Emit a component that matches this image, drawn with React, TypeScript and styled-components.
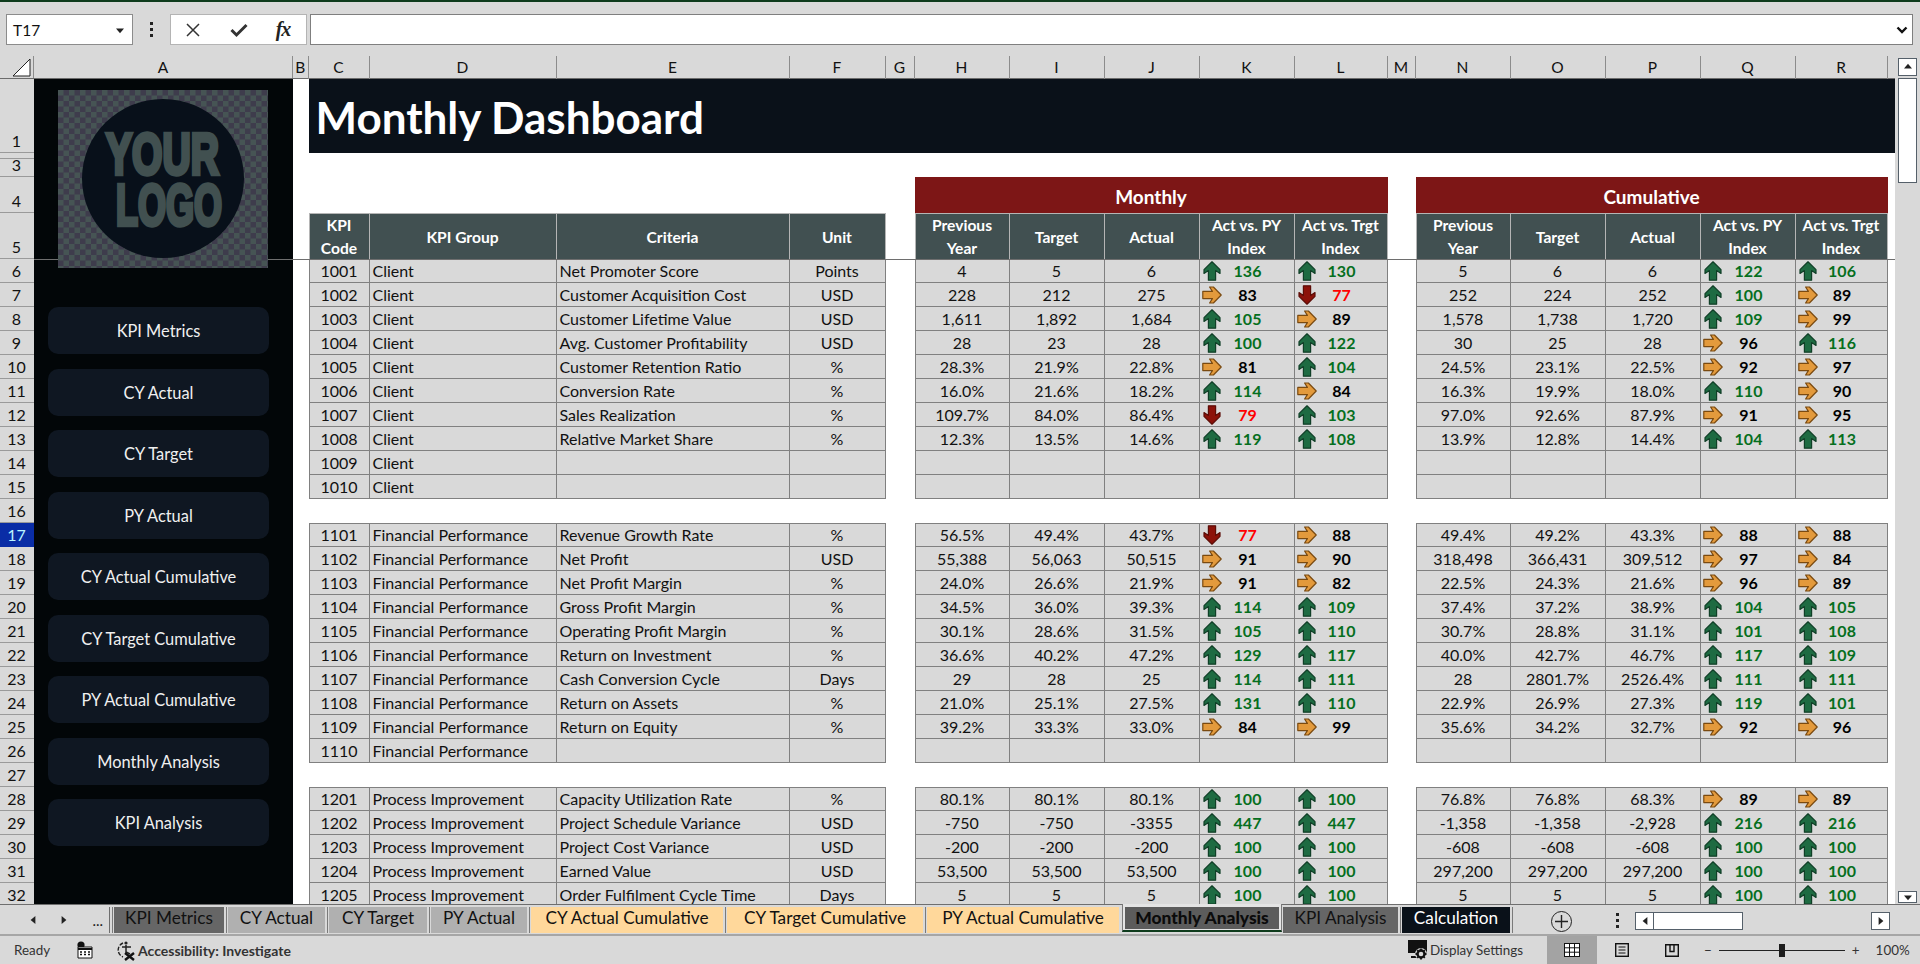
import * as React from 'react'
import styled, { createGlobalStyle } from 'styled-components'

const FONT = `Lato, "Open Sans", sans-serif`
const CHROME = '#d9d9d9'
const GRID_LINE = '#808080'
const COLUMNS = '15.5px 61px 187px 233px 96px 29px 95px 95px 95px 95px 93px 28px 95px 95px 95px 95px 92px 7.5px'

const GlobalStyle = createGlobalStyle`
  html, body {
    margin: 0;
    height: 100%;
    overflow: hidden;
    background: ${CHROME};
  }
  #root {
    height: 964px;
  }
  * {
    box-sizing: border-box;
  }
`

const Page = styled.div`
  width: 1920px;
  height: 964px;
  display: flex;
  flex-direction: column;
  background: ${CHROME};
  border-top: 2px solid #0e3b1c;
  font-family: ${FONT};
  color: #111;
  overflow: hidden;
`

// formula bar

const FormulaRow = styled.div`
  height: 54px;
  padding: 12px 7px 11px 6px;
  display: flex;
  align-items: stretch;
  flex-shrink: 0;
`

const NameBox = styled.div`
  width: 127px;
  background: #fff;
  border: 1px solid #8c8c8c;
  display: flex;
  align-items: center;
  justify-content: space-between;
  padding: 0 8px 0 6px;
  font-size: 15.5px;
`

const Kebab = styled.div<{ $w: number; $ml?: number }>`
  width: ${(p) => p.$w}px;
  margin-left: ${(p) => p.$ml ?? 0}px;
  flex-shrink: 0;
  display: flex;
  flex-direction: column;
  align-items: center;
  justify-content: center;
  gap: 3px;

  i {
    display: block;
    width: 3px;
    height: 3px;
    background: #222;
  }
`

const FormulaButtons = styled.div`
  width: 137px;
  background: #fff;
  border: 1px solid #b4b4b4;
  display: grid;
  grid-template-columns: 44px 48px 40px;
  align-items: center;
  justify-items: center;
`

const FxLabel = styled.span`
  font-family: 'Liberation Serif', serif;
  font-style: italic;
  font-weight: 700;
  font-size: 20px;
  letter-spacing: -1px;
  color: #222;
`

const FormulaInput = styled.div`
  flex: 1;
  margin-left: 3px;
  background: #fff;
  border: 1px solid #7f7f7f;
  display: flex;
  align-items: center;
  justify-content: flex-end;
  padding-right: 4px;
`

// sheet

const Workspace = styled.div`
  height: 848px;
  display: flex;
  flex-shrink: 0;
`

const SheetFrame = styled.div`
  width: 1895px;
  display: flex;
  flex-direction: column;
`

const ColumnHeads = styled.div`
  height: 23px;
  display: flex;
  border-bottom: 1px solid #6c6c6c;
  flex-shrink: 0;
`

const Corner = styled.div`
  width: 34px;
  border-right: 1px solid #8c8c8c;
  display: flex;
  align-items: flex-end;
  justify-content: flex-end;
  padding: 0 2px 1px 0;
`

const ColumnHeadA = styled.div`
  width: 259px;
  font-size: 15.5px;
  line-height: 23px;
  text-align: center;
  border-right: 1px solid #8c8c8c;
`

const ColumnHeadRest = styled.div`
  display: grid;
  grid-template-columns: ${COLUMNS};
`

const ColumnHead = styled.div`
  font-size: 15.5px;
  line-height: 23px;
  text-align: center;
  border-right: 1px solid #8c8c8c;

  &:last-child {
    border-right: 0;
  }
`

const SheetBody = styled.div`
  position: relative;
  flex: 1;
  display: flex;
  min-height: 0;
  overflow: hidden;
`

const FreezeLine = styled.div`
  position: absolute;
  left: 34px;
  right: 0;
  top: 180px;
  height: 1px;
  background: #6e6e6e;
  z-index: 1;
`

const RowHeads = styled.div`
  width: 34px;
  flex-shrink: 0;
  display: flex;
  flex-direction: column;
`

const RowHead = styled.div<{ $h: number; $active?: boolean }>`
  height: ${(p) => p.$h}px;
  flex-shrink: 0;
  overflow: hidden;
  display: flex;
  align-items: flex-end;
  justify-content: center;
  font-size: 16px;
  line-height: 22px;
  padding-right: 1px;
  border-bottom: 1px solid ${(p) => (p.$active ? '#0a2da6' : '#9a9a9a')};
  background: ${(p) => (p.$active ? '#0a2da6' : CHROME)};
  color: ${(p) => (p.$active ? '#b8f4ff' : '#111')};
`

const Sidebar = styled.div`
  width: 259px;
  flex-shrink: 0;
  background: #020608;
  padding: 11px 24px 0 14px;
  display: flex;
  flex-direction: column;
  align-items: flex-start;
`

const LogoSvg = styled.svg`
  position: relative;
  z-index: 2;
  margin: 0 0 39px 10px;
  flex-shrink: 0;
`

const NavList = styled.div`
  display: flex;
  flex-direction: column;
  gap: 14.5px;
  width: 221px;
`

const NavButton = styled.div`
  height: 47px;
  border-radius: 10px;
  background: #0f1722;
  color: #f0f0f0;
  font-size: 16.4px;
  display: flex;
  align-items: center;
  justify-content: center;
`

const Content = styled.div`
  width: 1602px;
  background: #fff;
  display: flex;
  flex-direction: column;
`

const TitleBand = styled.div`
  height: 74px;
  margin-left: 15.5px;
  margin-bottom: 24px;
  flex-shrink: 0;
  background: #0a1119;
  color: #fff;
  font-size: 44px;
  font-weight: 700;
  line-height: 76px;
  padding-left: 7px;
`

const Row = styled.div<{ $h?: number }>`
  display: grid;
  grid-template-columns: ${COLUMNS};
  height: ${(p) => p.$h ?? 24}px;
  flex-shrink: 0;
`

const Banner = styled.div<{ $from: number }>`
  grid-column: ${(p) => p.$from} / span 5;
  background: #7d1616;
  color: #fff;
  font-size: 19px;
  font-weight: 700;
  display: flex;
  align-items: center;
  justify-content: center;
  padding-top: 2px;
`

const HeadCell = styled.div<{ $col: number; $start?: boolean }>`
  grid-column: ${(p) => p.$col};
  background: #415051;
  color: #fff;
  font-size: 15.6px;
  font-weight: 700;
  line-height: 23px;
  text-align: center;
  white-space: nowrap;
  display: flex;
  align-items: center;
  justify-content: center;
  border-top: 1px solid #b5b5b5;
  border-right: 1px solid #b5b5b5;
  border-left: ${(p) => (p.$start ? '1px solid #b5b5b5' : '0')};
`

const Cell = styled.div<{ $col: number; $start?: boolean; $top?: boolean; $left?: boolean }>`
  grid-column: ${(p) => p.$col};
  background: ${CHROME};
  font-size: 16px;
  line-height: ${(p) => (p.$top ? '22px' : '24px')};
  white-space: nowrap;
  overflow: hidden;
  text-align: ${(p) => (p.$left ? 'left' : 'center')};
  padding-left: ${(p) => (p.$left ? '3px' : '0')};
  border-right: 1px solid ${GRID_LINE};
  border-bottom: 1px solid ${GRID_LINE};
  border-left: ${(p) => (p.$start ? `1px solid ${GRID_LINE}` : '0')};
  border-top: ${(p) => (p.$top ? `1px solid ${GRID_LINE}` : '0')};
`

const IndexCell = styled(Cell)`
  display: grid;
  grid-template-columns: 1fr auto 1fr;
  align-items: center;
  padding-left: 2px;
`

const IndexValue = styled.b<{ $tone: string }>`
  font-weight: 700;
  color: ${(p) => p.$tone};
`

const ArrowSvg = styled.svg`
  display: block;
`

// vertical scrollbar

const VScroll = styled.div`
  width: 25px;
  display: flex;
  flex-direction: column;
  padding: 2px 3px 1px 3px;
`

const ScrollButton = styled.div<{ $h: number }>`
  height: ${(p) => p.$h}px;
  flex-shrink: 0;
  background: #fff;
  border: 1px solid #55606a;
  display: flex;
  align-items: center;
  justify-content: center;
`

const VThumb = styled.div`
  height: 105px;
  margin-top: 2px;
  background: #fff;
  border: 1px solid #55606a;
`

const VTrack = styled.div`
  flex: 1;
`

// sheet tabs

const TabBar = styled.div`
  height: 32px;
  flex-shrink: 0;
  display: flex;
  align-items: flex-start;
  border-bottom: 2px solid #a6a6a6;
  border-top: 1px solid #6e6e6e;
  position: relative;
  padding-top: 2px;
`

const TabNav = styled.div`
  width: 110px;
  height: 26px;
  display: grid;
  grid-template-columns: 37px 31px 35px 1fr;
  align-items: center;
  justify-items: end;
  border-right: 1px solid #6e6e6e;
  font-size: 15px;
  color: #222;
`

const TabSep = styled.div`
  width: 1px;
  height: 26px;
  margin: 0 1.5px;
  background: #7a7a7a;
  flex-shrink: 0;
`

const Tab = styled.div<{ $w: number; $bg: string; $fg?: string }>`
  width: ${(p) => p.$w}px;
  height: 26px;
  flex-shrink: 0;
  background: ${(p) => p.$bg};
  color: ${(p) => p.$fg ?? '#111'};
  font-size: 17.2px;
  line-height: 22px;
  text-align: center;
  white-space: nowrap;
`

const ActiveTab = styled.div`
  width: 160px;
  height: 28px;
  flex-shrink: 0;
  margin: -3px 1px 0 3px;
  padding: 3px 2px 0;
  background: #e4e4e4;
  border-left: 1px solid #7a7a7a;
  border-right: 1px solid #7a7a7a;
  border-bottom: 2px solid #0e3b1c;
  position: relative;
  z-index: 1;
`

const ActiveLabel = styled.div`
  height: 22px;
  background: #5c5c5c;
  color: #0b0b0b;
  font-size: 17.4px;
  font-weight: 900;
  line-height: 21px;
  text-align: center;
  white-space: nowrap;
`

const AddSheet = styled.div`
  margin: 4px 0 0 37px;
  width: 21px;
  height: 21px;
  flex-shrink: 0;
  border: 1px solid #222;
  border-radius: 50%;
  display: flex;
  align-items: center;
  justify-content: center;
`

const TabKebabSlot = styled.div`
  height: 26px;
  display: flex;
  flex-shrink: 0;
`

const HScroll = styled.div`
  margin: 5px 0 0 8px;
  width: 255px;
  height: 18px;
  display: flex;
  flex-shrink: 0;
`

const HButton = styled.div<{ $push?: boolean }>`
  width: 19px;
  flex-shrink: 0;
  background: #fff;
  border: 1px solid #55606a;
  display: flex;
  align-items: center;
  justify-content: center;
  margin-left: ${(p) => (p.$push ? 'auto' : '0')};
`

const HThumb = styled.div`
  width: 89px;
  background: #fff;
  border: 1px solid #55606a;
  border-left: 0;
`

// status bar

const StatusBar = styled.div`
  flex: 1;
  display: flex;
  align-items: stretch;
  font-size: 13.4px;
  color: #333;
  padding-left: 14px;
`

const StatusItem = styled.div<{ $w?: number; $ml?: number; $strong?: boolean }>`
  display: flex;
  align-items: center;
  gap: 2px;
  margin-left: ${(p) => p.$ml ?? 0}px;
  width: ${(p) => (p.$w ? `${p.$w}px` : 'auto')};
  font-weight: ${(p) => (p.$strong ? 700 : 400)};
  font-size: ${(p) => (p.$strong ? '14px' : 'inherit')};
  white-space: nowrap;
  flex-shrink: 0;
`

const ViewButton = styled.div<{ $on?: boolean; $ml?: number }>`
  width: 50px;
  flex-shrink: 0;
  margin-left: ${(p) => p.$ml ?? 0}px;
  display: flex;
  align-items: center;
  justify-content: center;
  background: ${(p) => (p.$on ? '#a3a3a3' : 'transparent')};
`

const ZoomSlider = styled.div`
  width: 126px;
  height: 13px;
  margin: 0 5px;
  display: flex;
  align-items: center;
  position: relative;
  flex-shrink: 0;

  &::before {
    content: '';
    width: 100%;
    height: 1px;
    background: #222;
  }
`

const ZoomThumb = styled.div`
  position: absolute;
  left: 60px;
  top: 0;
  width: 6px;
  height: 13px;
  background: #1c1c1c;
`

// drawings

const Triangle = ({ dir, size = 8, color = '#222' }: { dir: 'up' | 'down' | 'left' | 'right'; size?: number; color?: string }) => {
  const points = {
    up: '0,7 5,1 10,7',
    down: '0,3 10,3 5,9',
    left: '8,0 8,10 2,5',
    right: '2,0 2,10 8,5'
  }[dir]
  return (
    <svg width={size} height={size} viewBox='0 0 10 10'>
      <polygon points={points} fill={color} />
    </svg>
  )
}

const arrowStyles = {
  up: { fill: '#1e6b42', stroke: '#103f27', turn: 0 },
  down: { fill: '#8c120a', stroke: '#5c0d07', turn: 180 },
  right: { fill: '#e39a3c', stroke: '#7a4a10', turn: 90 }
}

const IndexArrow = ({ dir }: { dir: keyof typeof arrowStyles }) => {
  const s = arrowStyles[dir]
  return (
    <ArrowSvg width='20' height='20' viewBox='0 0 20 20'>
      <path
        d='M10 .8 L18 8.6 V12.4 L13.6 9.6 V19.2 H6.4 V9.6 L2 12.4 V8.6 Z'
        fill={s.fill}
        stroke={s.stroke}
        strokeWidth='1.2'
        strokeLinejoin='round'
        transform={`rotate(${s.turn} 10 10)`}
      />
    </ArrowSvg>
  )
}

const Logo = () => (
  <LogoSvg width='210' height='178' viewBox='0 0 210 178'>
    <defs>
      <pattern id='checker' width='11' height='11' patternUnits='userSpaceOnUse'>
        <rect width='11' height='11' fill='#3e3c4c' />
        <rect width='5.5' height='5.5' fill='#465454' />
        <rect x='5.5' y='5.5' width='5.5' height='5.5' fill='#465454' />
      </pattern>
    </defs>
    <rect width='210' height='178' fill='url(#checker)' />
    <ellipse cx='105' cy='88.5' rx='81' ry='79.5' fill='#08101a' />
    <g fontFamily='"Liberation Sans", sans-serif' fontWeight='700' fontSize='58' fill='#415050' stroke='#415050' strokeWidth='4.4' strokeLinejoin='miter'>
      <text x='48' y='84' textLength='113' lengthAdjust='spacingAndGlyphs'>YOUR</text>
      <text x='58' y='135' textLength='106' lengthAdjust='spacingAndGlyphs'>LOGO</text>
    </g>
  </LogoSvg>
)

const CancelIcon = () => (
  <svg width='16' height='16' viewBox='0 0 16 16'>
    <path d='M2 2 L14 14 M14 2 L2 14' stroke='#333' strokeWidth='1.5' />
  </svg>
)

const CheckIcon = () => (
  <svg width='18' height='16' viewBox='0 0 18 16'>
    <path d='M1.5 8 L6.5 13 L16.5 3' stroke='#333' strokeWidth='3' fill='none' />
  </svg>
)

const Chevron = () => (
  <svg width='12' height='8' viewBox='0 0 12 8'>
    <path d='M1.5 1.5 L6 6 L10.5 1.5' stroke='#111' strokeWidth='2.4' fill='none' />
  </svg>
)

const CornerMark = () => (
  <svg width='19' height='19' viewBox='0 0 19 19'>
    <path d='M18 1 V18 H1 Z' fill='#fff' stroke='#222' strokeWidth='1' />
  </svg>
)

const PlusMark = () => (
  <svg width='13' height='13' viewBox='0 0 13 13'>
    <path d='M6.5 0 V13 M0 6.5 H13' stroke='#222' strokeWidth='1.4' />
  </svg>
)

const MacroIcon = () => (
  <svg width='16' height='18' viewBox='0 0 16 18'>
    <circle cx='4' cy='4' r='3.6' fill='#111' />
    <path d='M1 6 H15 V17 H1 Z' fill='#fff' stroke='#111' />
    <path d='M1 7 H15 V9 H1 Z' fill='#111' />
    <path d='M3 11 H5 M7 11 H9 M11 11 H13 M3 13.5 H5 M7 13.5 H9 M11 13.5 H13' stroke='#111' strokeWidth='1.5' />
  </svg>
)

const AccessibilityIcon = () => (
  <svg width='20' height='21' viewBox='0 0 20 21'>
    <path d='M7 3 A7.5 7.5 0 0 0 7 17' stroke='#222' strokeWidth='1.4' fill='none' strokeDasharray='4 1.5' />
    <circle cx='10' cy='3' r='1.6' fill='#222' />
    <path d='M6 7 H15 M10 5 V12 L14 14' stroke='#222' strokeWidth='1.5' fill='none' />
    <path d='M9 13 L18 20 M18 13 L9 20' stroke='#111' strokeWidth='2.4' />
  </svg>
)

const DisplayIcon = () => (
  <svg width='20' height='22' viewBox='0 0 20 22'>
    <path d='M0 1 H19 V14 H0 Z' fill='#111' />
    <path d='M3 17 H9 V19 H3 Z' fill='#111' />
    <circle cx='13' cy='15' r='6' fill={CHROME} />
    <circle cx='13' cy='15' r='3.5' fill='none' stroke='#111' strokeWidth='2.4' />
    <path d='M13 9.5 V11 M13 19 V20.5 M7.5 15 H9 M17 15 H18.5 M9.2 11.2 L10.2 12.2 M15.8 17.8 L16.8 18.8 M16.8 11.2 L15.8 12.2 M10.2 17.8 L9.2 18.8' stroke='#111' strokeWidth='1.8' />
  </svg>
)

const GridViewIcon = () => (
  <svg width='16' height='14' viewBox='0 0 16 14'>
    <rect x='.5' y='.5' width='15' height='13' fill='#fff' stroke='#111' />
    <path d='M5.5 1 V13 M10.5 1 V13 M1 4.8 H15 M1 9.2 H15' stroke='#111' />
  </svg>
)

const PageViewIcon = () => (
  <svg width='14' height='14' viewBox='0 0 14 14'>
    <rect x='.7' y='.7' width='12.6' height='12.6' fill='none' stroke='#111' strokeWidth='1.4' />
    <path d='M3.5 4 H10.5 M3.5 7 H10.5 M3.5 10 H10.5' stroke='#111' />
  </svg>
)

const BreakViewIcon = () => (
  <svg width='14' height='13' viewBox='0 0 14 13'>
    <path d='M.7 .7 H13.3 V12.3 H.7 Z M5 .7 V7.5 H9 V.7' fill='none' stroke='#111' strokeWidth='1.4' />
  </svg>
)

// data

type Group = { name: string; rows: [string, string, string, (string | number)[], (string | number)[]][] }

const groups: Group[] = [
  {
    name: 'Client',
    rows: [
      ['Net Promoter Score', 'Points', '1001', ['4', '5', '6', 136, 130], ['5', '6', '6', 122, 106]],
      ['Customer Acquisition Cost', 'USD', '1002', ['228', '212', '275', 83, 77], ['252', '224', '252', 100, 89]],
      ['Customer Lifetime Value', 'USD', '1003', ['1,611', '1,892', '1,684', 105, 89], ['1,578', '1,738', '1,720', 109, 99]],
      ['Avg. Customer Profitability', 'USD', '1004', ['28', '23', '28', 100, 122], ['30', '25', '28', 96, 116]],
      ['Customer Retention Ratio', '%', '1005', ['28.3%', '21.9%', '22.8%', 81, 104], ['24.5%', '23.1%', '22.5%', 92, 97]],
      ['Conversion Rate', '%', '1006', ['16.0%', '21.6%', '18.2%', 114, 84], ['16.3%', '19.9%', '18.0%', 110, 90]],
      ['Sales Realization', '%', '1007', ['109.7%', '84.0%', '86.4%', 79, 103], ['97.0%', '92.6%', '87.9%', 91, 95]],
      ['Relative Market Share', '%', '1008', ['12.3%', '13.5%', '14.6%', 119, 108], ['13.9%', '12.8%', '14.4%', 104, 113]],
      ['', '', '1009', [], []],
      ['', '', '1010', [], []]
    ]
  },
  {
    name: 'Financial Performance',
    rows: [
      ['Revenue Growth Rate', '%', '1101', ['56.5%', '49.4%', '43.7%', 77, 88], ['49.4%', '49.2%', '43.3%', 88, 88]],
      ['Net Profit', 'USD', '1102', ['55,388', '56,063', '50,515', 91, 90], ['318,498', '366,431', '309,512', 97, 84]],
      ['Net Profit Margin', '%', '1103', ['24.0%', '26.6%', '21.9%', 91, 82], ['22.5%', '24.3%', '21.6%', 96, 89]],
      ['Gross Profit Margin', '%', '1104', ['34.5%', '36.0%', '39.3%', 114, 109], ['37.4%', '37.2%', '38.9%', 104, 105]],
      ['Operating Profit Margin', '%', '1105', ['30.1%', '28.6%', '31.5%', 105, 110], ['30.7%', '28.8%', '31.1%', 101, 108]],
      ['Return on Investment', '%', '1106', ['36.6%', '40.2%', '47.2%', 129, 117], ['40.0%', '42.7%', '46.7%', 117, 109]],
      ['Cash Conversion Cycle', 'Days', '1107', ['29', '28', '25', 114, 111], ['28', '2801.7%', '2526.4%', 111, 111]],
      ['Return on Assets', '%', '1108', ['21.0%', '25.1%', '27.5%', 131, 110], ['22.9%', '26.9%', '27.3%', 119, 101]],
      ['Return on Equity', '%', '1109', ['39.2%', '33.3%', '33.0%', 84, 99], ['35.6%', '34.2%', '32.7%', 92, 96]],
      ['', '', '1110', [], []]
    ]
  },
  {
    name: 'Process Improvement',
    rows: [
      ['Capacity Utilization Rate', '%', '1201', ['80.1%', '80.1%', '80.1%', 100, 100], ['76.8%', '76.8%', '68.3%', 89, 89]],
      ['Project Schedule Variance', 'USD', '1202', ['-750', '-750', '-3355', 447, 447], ['-1,358', '-1,358', '-2,928', 216, 216]],
      ['Project Cost Variance', 'USD', '1203', ['-200', '-200', '-200', 100, 100], ['-608', '-608', '-608', 100, 100]],
      ['Earned Value', 'USD', '1204', ['53,500', '53,500', '53,500', 100, 100], ['297,200', '297,200', '297,200', 100, 100]],
      ['Order Fulfilment Cycle Time', 'Days', '1205', ['5', '5', '5', 100, 100], ['5', '5', '5', 100, 100]]
    ]
  }
]

const navItems = [
  'KPI Metrics',
  'CY Actual',
  'CY Target',
  'PY Actual',
  'CY Actual Cumulative',
  'CY Target Cumulative',
  'PY Actual Cumulative',
  'Monthly Analysis',
  'KPI Analysis'
]

const columnLetters = ['B', 'C', 'D', 'E', 'F', 'G', 'H', 'I', 'J', 'K', 'L', 'M', 'N', 'O', 'P', 'Q', 'R', '']

const rowHeads: [string, number][] = [
  ['1', 74],
  ['2', 6],
  ['3', 18],
  ['4', 36],
  ['5', 46],
  ...Array.from({ length: 27 }, (_, i): [string, number] => [String(i + 6), 24])
]

const directionOf = (value: number) => (value >= 100 ? 'up' : value < 80 ? 'down' : 'right')
const toneOf = (value: number) => (value >= 100 ? '#066f1e' : value < 80 ? '#ff0000' : '#000')

const MetricCells = ({ from, values, top }: { from: number; values: (string | number)[]; top?: boolean }) => (
  <>
    {[0, 1, 2, 3, 4].map((i) => {
      const value = values[i]
      const col = from + i
      if (typeof value === 'number') {
        return (
          <IndexCell key={i} $col={col} $top={top}>
            <IndexArrow dir={directionOf(value)} />
            <IndexValue $tone={toneOf(value)}>{value}</IndexValue>
            <span />
          </IndexCell>
        )
      }
      return (
        <Cell key={i} $col={col} $start={i === 0} $top={top}>
          {value}
        </Cell>
      )
    })}
  </>
)

const MetricHead = ({ from }: { from: number }) => (
  <>
    <HeadCell $col={from} $start>Previous<br />Year</HeadCell>
    <HeadCell $col={from + 1}>Target</HeadCell>
    <HeadCell $col={from + 2}>Actual</HeadCell>
    <HeadCell $col={from + 3}>Act vs. PY<br />Index</HeadCell>
    <HeadCell $col={from + 4}>Act vs. Trgt<br />Index</HeadCell>
  </>
)

export default function App() {
  return (
    <Page>
      <GlobalStyle />
      <FormulaRow>
        <NameBox>
          T17
          <Triangle dir='down' />
        </NameBox>
        <Kebab $w={37}>
          <i />
          <i />
          <i />
        </Kebab>
        <FormulaButtons>
          <CancelIcon />
          <CheckIcon />
          <FxLabel>fx</FxLabel>
        </FormulaButtons>
        <FormulaInput>
          <Chevron />
        </FormulaInput>
      </FormulaRow>

      <Workspace>
        <SheetFrame>
          <ColumnHeads>
            <Corner>
              <CornerMark />
            </Corner>
            <ColumnHeadA>A</ColumnHeadA>
            <ColumnHeadRest>
              {columnLetters.map((letter) => (
                <ColumnHead key={letter || 'end'}>{letter}</ColumnHead>
              ))}
            </ColumnHeadRest>
          </ColumnHeads>

          <SheetBody>
            <FreezeLine />
            <RowHeads>
              {rowHeads.map(([label, height]) => (
                <RowHead key={label} $h={height} $active={label === '17'}>
                  {label}
                </RowHead>
              ))}
            </RowHeads>

            <Sidebar>
              <Logo />
              <NavList>
                {navItems.map((item) => (
                  <NavButton key={item}>{item}</NavButton>
                ))}
              </NavList>
            </Sidebar>

            <Content>
              <TitleBand>Monthly Dashboard</TitleBand>
              <Row $h={36}>
                <Banner $from={7}>Monthly</Banner>
                <Banner $from={13}>Cumulative</Banner>
              </Row>
              <Row $h={46}>
                <HeadCell $col={2} $start>KPI<br />Code</HeadCell>
                <HeadCell $col={3}>KPI Group</HeadCell>
                <HeadCell $col={4}>Criteria</HeadCell>
                <HeadCell $col={5}>Unit</HeadCell>
                <MetricHead from={7} />
                <MetricHead from={13} />
              </Row>
              {groups.map((group, g) => (
                <React.Fragment key={group.name}>
                  {g > 0 && <Row />}
                  {group.rows.map(([criteria, unit, code, monthly, cumulative], r) => {
                    const top = g > 0 && r === 0
                    return (
                      <Row key={code}>
                        <Cell $col={2} $start $top={top}>{code}</Cell>
                        <Cell $col={3} $left $top={top}>{group.name}</Cell>
                        <Cell $col={4} $left $top={top}>{criteria}</Cell>
                        <Cell $col={5} $top={top}>{unit}</Cell>
                        <MetricCells from={7} values={monthly} top={top} />
                        <MetricCells from={13} values={cumulative} top={top} />
                      </Row>
                    )
                  })}
                </React.Fragment>
              ))}
            </Content>
          </SheetBody>
        </SheetFrame>

        <VScroll>
          <ScrollButton $h={18}>
            <Triangle dir='up' />
          </ScrollButton>
          <VThumb />
          <VTrack />
          <ScrollButton $h={12}>
            <Triangle dir='down' />
          </ScrollButton>
        </VScroll>
      </Workspace>

      <TabBar>
        <TabNav>
          <Triangle dir='left' />
          <Triangle dir='right' />
          <span>...</span>
          <span />
        </TabNav>
        <TabSep />
        <Tab $w={110} $bg='#666'>KPI Metrics</Tab>
        <TabSep />
        <Tab $w={97} $bg='#b0b0b0'>CY Actual</Tab>
        <TabSep />
        <Tab $w={98} $bg='#b0b0b0'>CY Target</Tab>
        <TabSep />
        <Tab $w={96} $bg='#b0b0b0'>PY Actual</Tab>
        <TabSep />
        <Tab $w={192} $bg='#ffd89b'>CY Actual Cumulative</Tab>
        <TabSep />
        <Tab $w={196} $bg='#ffd89b'>CY Target Cumulative</Tab>
        <TabSep />
        <Tab $w={192} $bg='#ffd89b'>PY Actual Cumulative</Tab>
        <ActiveTab>
          <ActiveLabel>Monthly Analysis</ActiveLabel>
        </ActiveTab>
        <Tab $w={115} $bg='#666'>KPI Analysis</Tab>
        <TabSep />
        <Tab $w={108} $bg='#0a1119' $fg='#fff'>Calculation</Tab>
        <TabSep />
        <AddSheet>
          <PlusMark />
        </AddSheet>
        <TabKebabSlot>
          <Kebab $w={20} $ml={35}>
            <i />
            <i />
            <i />
          </Kebab>
        </TabKebabSlot>
        <HScroll>
          <HButton>
            <Triangle dir='left' />
          </HButton>
          <HThumb />
          <HButton $push>
            <Triangle dir='right' />
          </HButton>
        </HScroll>
      </TabBar>

      <StatusBar>
        <StatusItem $w={63}>Ready</StatusItem>
        <StatusItem>
          <MacroIcon />
        </StatusItem>
        <StatusItem $ml={23} $strong>
          <AccessibilityIcon />
          Accessibility: Investigate
        </StatusItem>
        <StatusItem $ml={1117}>
          <DisplayIcon />
          Display Settings
        </StatusItem>
        <ViewButton $on $ml={24}>
          <GridViewIcon />
        </ViewButton>
        <ViewButton>
          <PageViewIcon />
        </ViewButton>
        <ViewButton>
          <BreakViewIcon />
        </ViewButton>
        <StatusItem $ml={7}>
          −
          <ZoomSlider>
            <ZoomThumb />
          </ZoomSlider>
          +
        </StatusItem>
        <StatusItem $ml={16}>100%</StatusItem>
      </StatusBar>
    </Page>
  )
}
